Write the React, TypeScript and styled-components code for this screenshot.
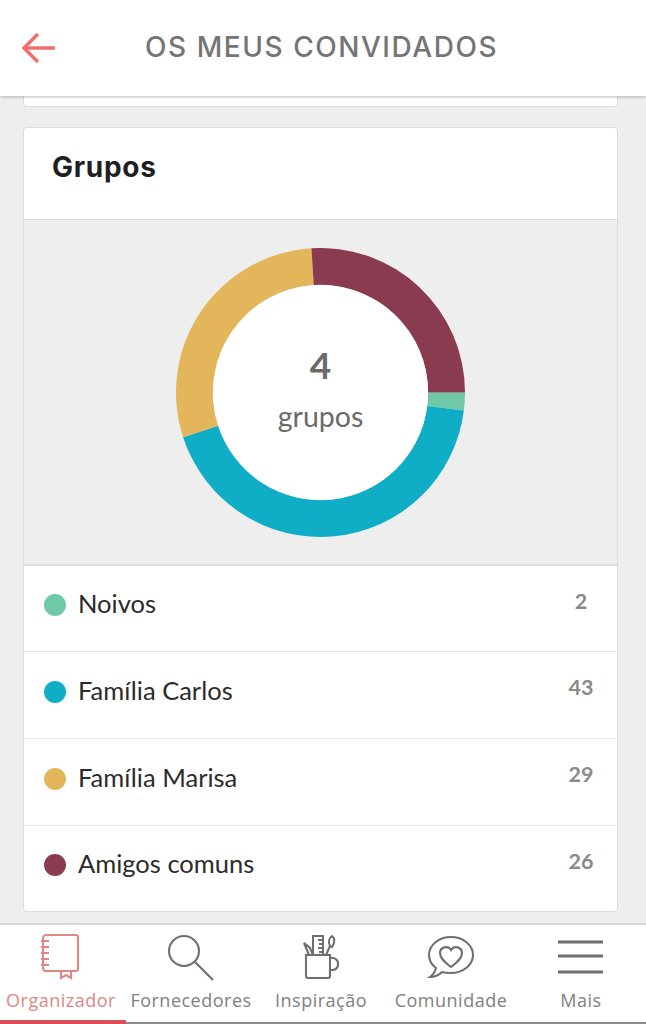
import React from 'react';
import styled, {createGlobalStyle} from 'styled-components';

type Group = {
    name: string;
    total: number;
    color: string;
};

const groups: Group[] = [
    {name: 'Noivos', total: 2, color: '#6fc8a6'},
    {name: 'Família Carlos', total: 43, color: '#0fadc6'},
    {name: 'Família Marisa', total: 29, color: '#e3b65b'},
    {name: 'Amigos comuns', total: 26, color: '#8a3b50'},
];

const polar = (radius: number, angle: number) => {
    const rad = (angle * Math.PI) / 180;
    return `${145 + radius * Math.cos(rad)} ${145 + radius * Math.sin(rad)}`;
};

const slicePath = (start: number, end: number) => {
    const large = end - start > 180 ? 1 : 0;
    return `M${polar(145, start)}A145 145 0 ${large} 1 ${polar(145, end)}L${polar(108, end)}A108 108 0 ${large} 0 ${polar(108, start)}Z`;
};

const Donut = () => {
    const total = groups.reduce((sum, group) => sum + group.total, 0);
    let angle = 0;
    return (
        <DonutSvg viewBox="0 0 290 290">
            {groups.map((group) => {
                const start = angle;
                angle += (group.total / total) * 360;
                return <path key={group.name} d={slicePath(start, angle)} fill={group.color}/>;
            })}
        </DonutSvg>
    );
};

const App = () => (
    <Page>
        <GlobalStyle/>
        <Header>
            <BackIcon viewBox="0 0 34 32">
                <path d="M16 2 2 16l14 14M2 16h31" fill="none" stroke="#ee6f6c" strokeWidth="3.4"/>
            </BackIcon>
            <Title>OS MEUS CONVIDADOS</Title>
        </Header>
        <Content>
            <PreviousCard/>
            <Card>
                <CardTitle>Grupos</CardTitle>
                <ChartArea>
                    <DonutWrap>
                        <Donut/>
                        <DonutCenter>
                            <DonutNumber>4</DonutNumber>
                            <DonutLabel>grupos</DonutLabel>
                        </DonutCenter>
                    </DonutWrap>
                </ChartArea>
                {groups.map((group) => (
                    <GroupRow key={group.name}>
                        <Dot color={group.color}/>
                        <GroupName>{group.name}</GroupName>
                        <GroupTotal>{group.total}</GroupTotal>
                    </GroupRow>
                ))}
            </Card>
        </Content>
        <TabBar>
            <Tab active>
                <TabIcon viewBox="0 0 46 46" stroke="#e08785">
                    <path d="M8 2h30a2 2 0 0 1 2 2v32a2 2 0 0 1-2 2H8a3 3 0 0 1-3-3V5a3 3 0 0 1 3-3Z"/>
                    <path d="M3 8h8M3 14h8M3 20h8M3 26h8M3 32h8M23 38v7l5-3 5 3v-7"/>
                </TabIcon>
                <TabLabel>Organizador</TabLabel>
            </Tab>
            <Tab>
                <TabIcon viewBox="0 0 46 46">
                    <circle cx="16" cy="18" r="15"/>
                    <path d="m27 29 18 18"/>
                </TabIcon>
                <TabLabel>Fornecedores</TabLabel>
            </Tab>
            <Tab>
                <TabIcon viewBox="0 0 46 46">
                    <path d="M8 22h24v21a2 2 0 0 1-2 2H10a2 2 0 0 1-2-2ZM32 25h3a5.500 5.500 0 0 1 5 6 5.500 5.500 0 0 1-5 6h-3"/>
                    <path d="M15 22V3h10v19M20 7h5M21 11h4M20 15h5M21 19h4"/>
                    <path d="M11 22 6 10l6 5 3 7M28 22l4-9M32 13c-2-4-1-8 2-10 3 2 3 7 0 11Z"/>
                </TabIcon>
                <TabLabel>Inspiração</TabLabel>
            </Tab>
            <Tab>
                <TabIcon viewBox="0 0 46 46">
                    <path d="M23 4C11 4 1 12 1 22c0 6 3 10 7 13-1 4-3 7-6 9 5 0 9-2 12-5 3 1 6 1 9 1 12 0 22-8 22-18S35 4 23 4Z"/>
                    <path d="M23 34c-5-4-11-8-11-14 0-6 8-8 11-3 3-5 11-3 11 3 0 6-6 10-11 14Z"/>
                </TabIcon>
                <TabLabel>Comunidade</TabLabel>
            </Tab>
            <Tab>
                <MenuIcon viewBox="0 0 46 46">
                    <path d="M0 9h45M0 23h45M0 39h45"/>
                </MenuIcon>
                <TabLabel>Mais</TabLabel>
            </Tab>
        </TabBar>
    </Page>
);

export default App;

const GlobalStyle = createGlobalStyle`
    html, body {
        margin: 0;
        padding: 0;
        background: #eeeeee;
    }
`;

const Page = styled.div`
    width: 646px;
    height: 1024px;
    display: flex;
    flex-direction: column;
    overflow: hidden;
    background: #eeeeee;
    font-family: Lato, "Liberation Sans", sans-serif;
`;

const Header = styled.header`
    height: 96px;
    flex: none;
    display: flex;
    align-items: center;
    position: relative;
    z-index: 1;
    background: #fff;
    box-shadow: 0 1px 3px rgba(0, 0, 0, .25);
`;

const BackIcon = styled.svg`
    width: 34px;
    height: 32px;
    margin-left: 22px;
`;

const Title = styled.h1`
    margin: 0 0 2px 89px;
    font-family: Inter, Lato, sans-serif;
    font-size: 28px;
    font-weight: 500;
    letter-spacing: 1.55px;
    white-space: nowrap;
    color: #757575;
`;

const Content = styled.main`
    flex: 1;
    min-height: 0;
    display: flex;
    flex-direction: column;
    gap: 20px;
    padding: 0 28px 0 23px;
`;

const PreviousCard = styled.div`
    height: 10px;
    flex: none;
    background: #fff;
    border: 1px solid #dddddd;
    border-top: 0;
    border-radius: 0 0 4px 4px;
`;

const Card = styled.section`
    background: #fff;
    border: 1px solid #dddddd;
    border-radius: 4px;
`;

const CardTitle = styled.h2`
    margin: 0;
    height: 92px;
    padding: 0 28px 14px;
    display: flex;
    align-items: center;
    box-sizing: border-box;
    font-family: Inter, Lato, sans-serif;
    font-size: 28px;
    font-weight: 700;
    letter-spacing: .7px;
    color: #1f1f1f;
    border-bottom: 1px solid #dddddd;
`;

const ChartArea = styled.div`
    height: 344px;
    display: flex;
    align-items: center;
    justify-content: center;
    background: #eeeeee;
    border-bottom: 2px solid #dddddd;
`;

const DonutWrap = styled.div`
    width: 289px;
    height: 289px;
    position: relative;
`;

const DonutSvg = styled.svg`
    display: block;
    width: 100%;
    height: 100%;
`;

const DonutCenter = styled.div`
    position: absolute;
    inset: 37px;
    border-radius: 50%;
    background: #fff;
    display: flex;
    flex-direction: column;
    align-items: center;
    justify-content: center;
    color: #6a6a6a;
`;

const DonutNumber = styled.div`
    font-size: 37px;
    font-weight: 700;
    line-height: 44px;
    margin-top: -5px;
`;

const DonutLabel = styled.div`
    font-size: 28.5px;
    line-height: 40px;
    margin-top: 9px;
`;

const GroupRow = styled.div`
    height: 79px;
    display: flex;
    align-items: center;
    padding: 0 23px 7px 20px;
    border-bottom: 1px solid #e6e6e6;

    ${ChartArea} + & {
        height: 78px;
    }

    &:last-child {
        height: 78px;
        border-bottom: 0;
    }
`;

const Dot = styled.span<{color: string}>`
    width: 22px;
    height: 22px;
    border-radius: 50%;
    flex: none;
    background: ${(props) => props.color};
`;

const GroupName = styled.span`
    flex: 1;
    margin: 0 0 4px 12px;
    font-size: 25.5px;
    color: #2b2b2b;
`;

const GroupTotal = styled.span`
    min-width: 26px;
    margin-top: -9px;
    text-align: center;
    font-size: 21.5px;
    font-weight: 700;
    color: #8a8a8a;
`;

const TabBar = styled.nav`
    height: 101px;
    flex: none;
    display: grid;
    grid-template-columns: 126px 130px 130px 130px 130px;
    background: #fff;
    border-top: 2px solid #d8d8d8;
    box-sizing: border-box;
`;

const Tab = styled.div<{active?: boolean}>`
    display: flex;
    flex-direction: column;
    align-items: center;
    padding: 8px ${(props) => (props.active ? '4px' : '0')} 0 0;
    box-sizing: border-box;
    color: ${(props) => (props.active ? '#df8584' : '#808080')};
    border-bottom: ${(props) => (props.active ? '4px solid #dc4f57' : '2px solid #8a8a8a')};
`;

const TabIcon = styled.svg.attrs({fill: 'none', strokeWidth: 2.1})`
    width: 46px;
    height: 46px;
    flex: none;
    overflow: visible;
    stroke: ${(props) => props.stroke || '#6f6f6f'};
`;

const MenuIcon = styled(TabIcon).attrs({strokeWidth: 3})``;

const TabLabel = styled.span`
    margin-top: 9px;
    font-family: "Open Sans", Inter, sans-serif;
    font-size: 18px;
    letter-spacing: .5px;
    white-space: nowrap;
`;
